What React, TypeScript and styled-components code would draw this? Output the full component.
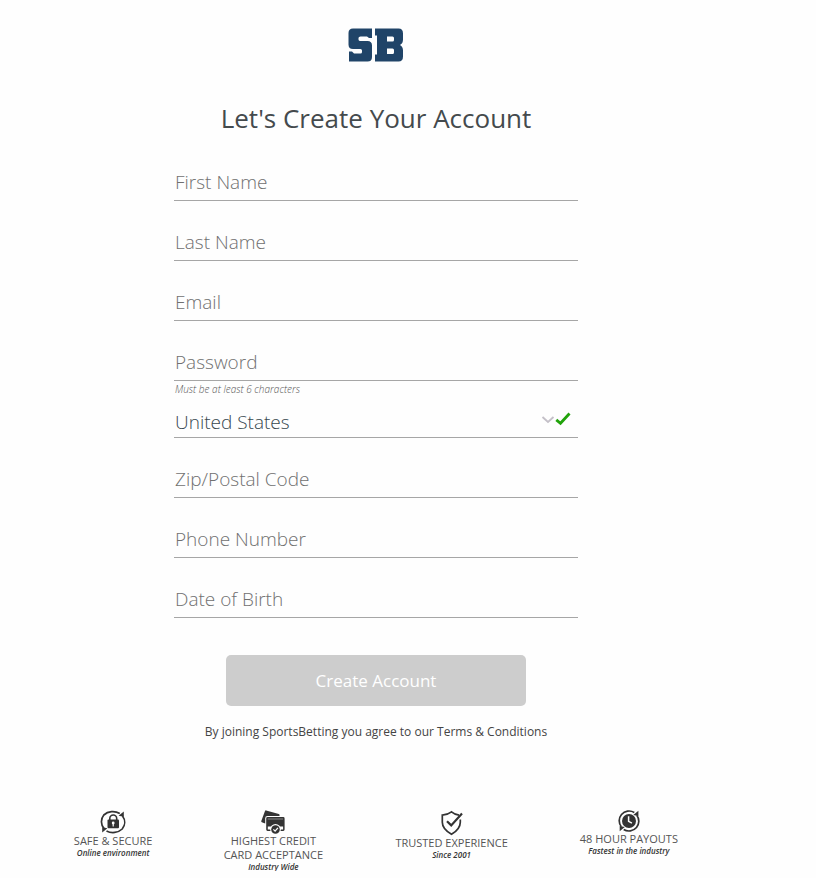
import React from "react";
import styled, { createGlobalStyle } from "styled-components";

const GlobalStyle = createGlobalStyle`
  *, *::before, *::after { box-sizing: border-box; }
  body {
    margin: 0;
    background: #fefefe;
    color: #444a4d;
    font-family: "Open Sans", "Noto Sans", sans-serif;
  }
`;

const Page = styled.main`
  padding: 28px 64px 0 0;
  display: flex;
  flex-direction: column;
  align-items: center;
`;

const Logo = styled.svg`
  width: 56px;
  height: 34px;
  display: block;
`;

const Title = styled.h1`
  margin: 38px 0 0;
  font-size: 26px;
  line-height: 36px;
  font-weight: 400;
  text-align: center;
`;

const Form = styled.form`
  width: 100%;
  max-width: 404px;
  margin-top: 5px;
  display: flex;
  flex-direction: column;
`;

const Field = styled.div<{ $compact?: boolean }>`
  position: relative;
  padding-top: ${(p) => (p.$compact ? 0 : 20)}px;
`;

const controlStyle = `
  display: block;
  width: 100%;
  height: 40px;
  margin: 0;
  padding: 2px 1px 0;
  border: 0;
  border-bottom: 1px solid #a6a6a6;
  border-radius: 0;
  background: transparent;
  font-family: inherit;
  font-size: 19px;
  font-weight: 300;
  outline-offset: 2px;
`;

const Input = styled.input`
  ${controlStyle}
  color: #444a4d;
  &::placeholder {
    color: #707070;
    opacity: 1;
  }
`;

const Select = styled.select`
  ${controlStyle}
  appearance: none;
  padding-top: 8px;
  color: #37474f;
`;

const Hint = styled.small`
  display: block;
  padding-left: 1px;
  font-size: 10px;
  line-height: 17px;
  font-style: italic;
  font-weight: 300;
  color: #555;
`;

const SelectMarks = styled.span`
  position: absolute;
  right: 7px;
  top: 13px;
  display: flex;
  align-items: center;
  pointer-events: none;
`;

const Submit = styled.button`
  align-self: center;
  width: 300px;
  height: 51px;
  margin-top: 37px;
  border: 0;
  border-radius: 5px;
  background: #cdcdcd;
  color: #fff;
  font-family: inherit;
  font-size: 17px;
`;

const Terms = styled.p`
  margin: 16px 0 0;
  font-size: 12px;
  line-height: 20px;
  text-align: center;
  color: #444;
  a {
    color: inherit;
    text-decoration: none;
  }
`;

const Benefits = styled.ul`
  list-style: none;
  width: 100%;
  margin: 68px 0 0;
  padding: 0 44px 0 33px;
  display: grid;
  grid-template-columns: 160fr 160fr 196fr 158fr;
  align-items: start;
`;

const Benefit = styled.li`
  display: flex;
  flex-direction: column;
  align-items: center;
  text-align: center;
`;

const BenefitIcon = styled.svg`
  display: block;
  flex: none;
`;

const BenefitTitle = styled.span`
  font-size: 11px;
  line-height: 14px;
  color: #555;
`;

const BenefitNote = styled.em`
  font-size: 8px;
  line-height: 9px;
  font-weight: 600;
  color: #333;
`;

const SecureIcon = () => (
  <BenefitIcon width="28" height="24" viewBox="0 0 28 24" fill="none" stroke="#333" aria-hidden="true">
    <path d="M5 18.500A11.800 11 0 0 1 4.800 5 12.500 11 0 0 1 20.800 3.500" strokeWidth="1.7" />
    <path d="M23.500 6A11.800 11 0 0 1 23.200 19 12.500 11 0 0 1 7.500 20.900" strokeWidth="1.7" />
    <path d="M24.8 1.6v5.2l-5.2-1zM3.2 22.4v-5.2l5.2 1z" fill="#333" stroke="none" />
    <rect x="8.5" y="9.6" width="11.5" height="8.6" rx="1" fill="#333" stroke="none" />
    <path d="M10.8 10.5V8.4a3.45 3.45 0 0 1 6.9 0v2.1" strokeWidth="1.6" />
    <circle cx="14.2" cy="13" r="1.4" fill="#fff" stroke="none" />
    <path d="M14.2 13v3.5" stroke="#fff" strokeWidth="1.2" />
  </BenefitIcon>
);

const CardsIcon = () => (
  <BenefitIcon width="24" height="24" viewBox="0 0 24 24" aria-hidden="true">
    <path d="M5.200.4 17.800 4q1 .4.8 1.400L18.400 6H6.500Q4.200 6 4.200 8.300V13.500L.8 12.200q-.8-.4-.5-1.200L3.900 1.200Q4.300.2 5.200.4Z" fill="#333" />
    <path d="M6.600 7h15.600q1.400 0 1.400 1.400v11.200q0 1.400-1.400 1.400h-3v-1.500h2.900v-3H6.800v3H10V21H6.600q-1.400 0-1.400-1.400V8.400Q5.200 7 6.600 7Z" fill="#333" />
    <path d="M6.700 9h15.400" stroke="#888" strokeWidth="1" />
    <circle cx="14.500" cy="19.300" r="5.300" fill="#fefefe" />
    <circle cx="14.500" cy="19.500" r="4.300" fill="#333" />
    <path d="m12.400 19.400 1.700 1.700 2.800-3.300" fill="none" stroke="#fefefe" strokeWidth="1.3" />
  </BenefitIcon>
);

const ShieldIcon = () => (
  <BenefitIcon width="22" height="26" viewBox="0 0 22 26" fill="none" stroke="#333" aria-hidden="true">
    <path d="M18 5.2Q14 4.8 10.5 1.9 6.6 4.9 1.3 5.1v7.1c0 5.7 4.8 9.5 9.2 12.1 4.4-2.6 8.800-6.400 8.800-12.100V9.500" strokeWidth="1.7" />
    <path d="m6 11.2 4.2 4.2L21 3.5" strokeWidth="2.2" />
  </BenefitIcon>
);

const ClockIcon = () => (
  <BenefitIcon width="24" height="22" viewBox="0 0 24 22" fill="none" stroke="#333" aria-hidden="true">
    <path d="M4.300 16.800A9.800 9.800 0 0 1 4.500 4.500 10 10 0 0 1 17.300 2.500" strokeWidth="1.7" />
    <path d="M19.800 5.300A9.800 9.800 0 0 1 19.500 17.500 10 10 0 0 1 6.700 19.500" strokeWidth="1.7" />
    <path d="M21.4.8v5.1l-5.1-1zM2.7 21.2v-5.1l5.1 1z" fill="#333" stroke="none" />
    <circle cx="12" cy="11" r="7" fill="#333" stroke="none" />
    <path d="M11.6 6.3v5.1l3.3 1.8" stroke="#fefefe" strokeWidth="1.5" />
  </BenefitIcon>
);

const fieldsBefore = [
  { label: "First Name", type: "text" },
  { label: "Last Name", type: "text" },
  { label: "Email", type: "email" },
];

const fieldsAfter = [
  { label: "Zip/Postal Code", type: "text" },
  { label: "Phone Number", type: "tel" },
  { label: "Date of Birth", type: "text" },
];

const benefits = [
  { icon: <SecureIcon />, title: ["SAFE & SECURE"], note: "Online environment" },
  { icon: <CardsIcon />, title: ["HIGHEST CREDIT", "CARD ACCEPTANCE"], note: "Industry Wide" },
  { icon: <ShieldIcon />, title: ["TRUSTED EXPERIENCE"], note: "Since 2001" },
  { icon: <ClockIcon />, title: ["48 HOUR PAYOUTS"], note: "Fastest in the industry" },
];

const TextField = ({ label, type }: { label: string; type: string }) => (
  <Field>
    <Input type={type} placeholder={label} aria-label={label} />
  </Field>
);

export default function App() {
  return (
    <>
      <GlobalStyle />
      <Page>
        <Logo viewBox="0 0 56 34" role="img" aria-label="SB">
          <path
            fill="#204468"
            fillRule="evenodd"
            d="M5 .5H24V10H21L19 8.500H12.500Q10.500 8.500 10.500 10v1.500Q10.500 13 12.500 13H19.500q4.500 0 4.500 4.500V29q0 4.500-4.500 4.500H1V23.500H4L6 25.500h6.500q1.500 0 1.500-1.500v-1.500Q14 21 12.500 21H5Q.5 21 .5 16.500V5Q.5.500 5 .500ZM27 .500h23.500Q55 .500 55 5.500v6q0 4-3 5.500Q55 18.500 55 22.500v6q0 5-4.500 5H27V26.500h2V7.500H27ZM39 8.500v5h5.500Q46 13.500 46 12V10Q46 8.500 44.500 8.500ZM39 20.500v5.500h5.500Q46 26 46 24.500v-2.500Q46 20.500 44.500 20.500Z"
          />
        </Logo>
        <Title>Let's Create Your Account</Title>
        <Form onSubmit={(e) => e.preventDefault()}>
          {fieldsBefore.map((f) => (
            <TextField key={f.label} {...f} />
          ))}
          <Field>
            <Input type="password" placeholder="Password" aria-label="Password" aria-describedby="password-hint" />
          </Field>
          <Hint id="password-hint">Must be at least 6 characters</Hint>
          <Field $compact>
            <Select aria-label="Country" defaultValue="United States">
              <option>United States</option>
            </Select>
            <SelectMarks>
              <svg width="14" height="14" viewBox="0 0 14 14" fill="none" aria-hidden="true">
                <path d="m1.5 5 5.5 5 5.5-5" stroke="#c4c0c8" strokeWidth="1.8" />
              </svg>
              <svg width="16" height="16" viewBox="0 0 16 16" fill="none" aria-hidden="true">
                <path d="m1.300 8.800 4.200 3.500L14.500 2.500" stroke="#21a30b" strokeWidth="2.800" />
              </svg>
            </SelectMarks>
          </Field>
          {fieldsAfter.map((f) => (
            <TextField key={f.label} {...f} />
          ))}
          <Submit type="submit">Create Account</Submit>
          <Terms>
            By joining SportsBetting you agree to our <a href="#terms">Terms &amp; Conditions</a>
          </Terms>
        </Form>
        <Benefits>
          {benefits.map((b) => (
            <Benefit key={b.note}>
              {b.icon}
              {b.title.map((line) => (
                <BenefitTitle key={line}>{line}</BenefitTitle>
              ))}
              <BenefitNote>{b.note}</BenefitNote>
            </Benefit>
          ))}
        </Benefits>
      </Page>
    </>
  );
}
